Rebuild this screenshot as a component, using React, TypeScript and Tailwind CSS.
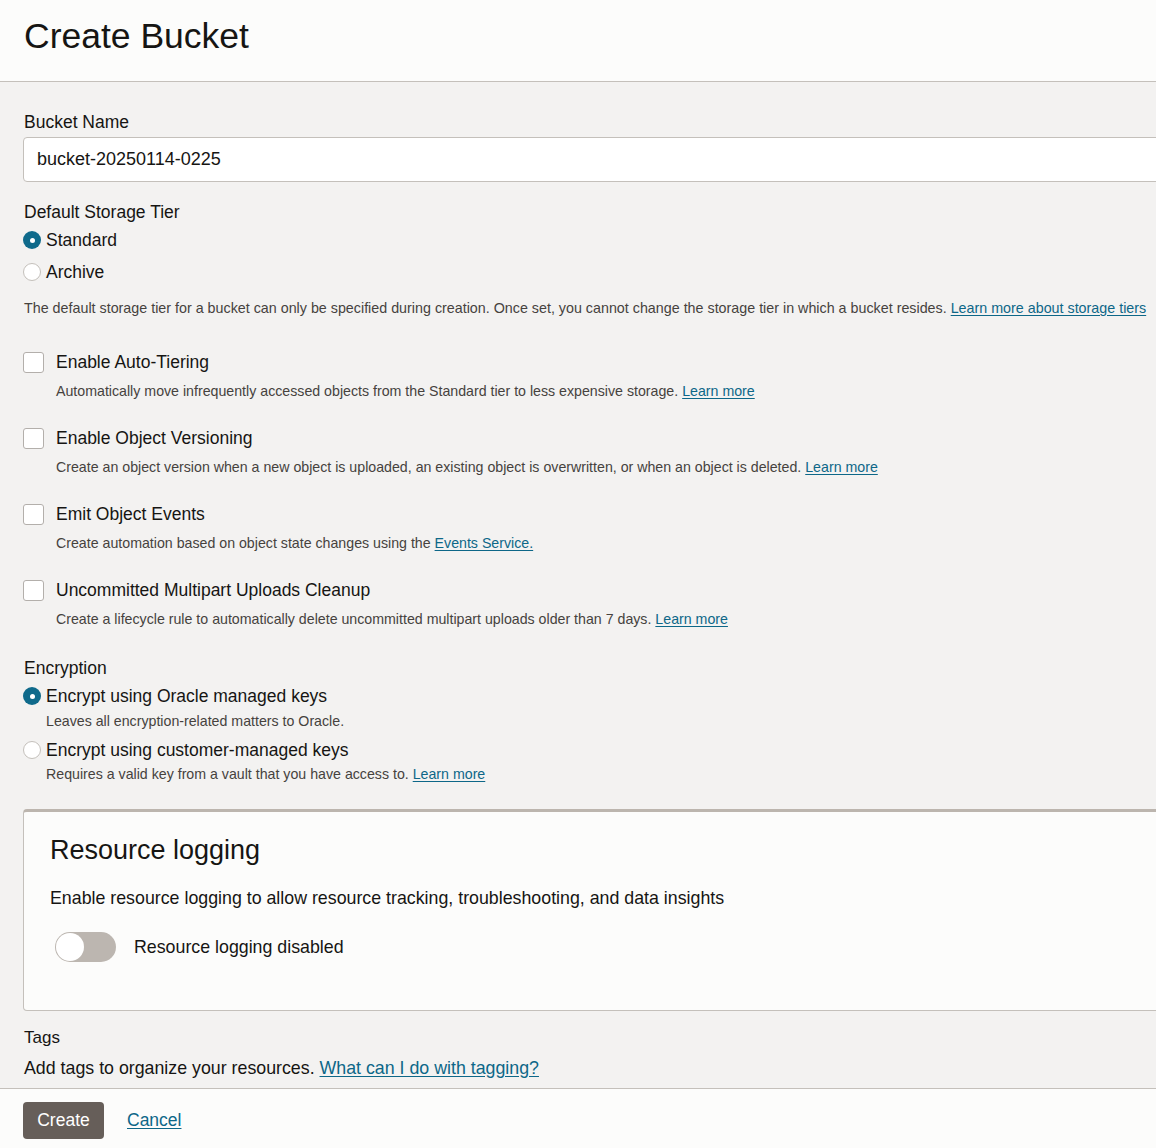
const font = { fontFamily: '"Liberation Sans", Arial, sans-serif' }

function Radio({ checked }: { checked?: boolean }) {
  return checked ? (
    <span className="flex h-[18px] w-[18px] shrink-0 items-center justify-center rounded-full bg-[#0f6a8b]">
      <span className="h-[5px] w-[5px] rounded-full bg-white" />
    </span>
  ) : (
    <span className="h-[18px] w-[18px] shrink-0 rounded-full border border-[#c4c0bb] bg-white" />
  )
}

function Link({ children }: { children: React.ReactNode }) {
  return <a href="#" className="text-[#0d6788] underline underline-offset-2">{children}</a>
}

function CheckOption({ label, children }: { label: string; children: React.ReactNode }) {
  return (
    <div>
      <label className="flex h-[24px] items-center">
        <span className="h-[21px] w-[21px] shrink-0 rounded-[3px] border border-[#b3afab] bg-white" />
        <span className="ml-[12px] text-[17.5px] text-[#161513]">{label}</span>
      </label>
      <p className="mt-[7px] ml-[33px] text-[14.2px] leading-[20px] text-[#46423e]">{children}</p>
    </div>
  )
}

export default function App() {
  return (
    <div className="min-h-[1148px] w-[1156px] overflow-hidden bg-[#f3f2f1] text-[#161513]" style={font}>
      <header className="h-[82px] border-b border-[#c4c0bb] bg-[#fcfcfb] px-[24px] pt-[15px]">
        <h1 className="text-[35.5px] leading-[42px]">Create Bucket</h1>
      </header>

      <main className="w-[1200px] pl-[23px] pt-[28px] pb-[8px]">
        <div className="pl-[1px] text-[17.5px] leading-[24px]">Bucket Name</div>
        <input
          readOnly
          value="bucket-20250114-0225"
          className="mt-[3px] h-[45px] w-full rounded-[4px] border border-[#c4c0bb] bg-white px-[13px] text-[18px] text-[#161513] outline-none"
        />

        <div className="mt-[18px] pl-[1px] text-[17.5px] leading-[24px]">Default Storage Tier</div>
        <label className="flex h-[32px] items-center">
          <Radio checked />
          <span className="ml-[5px] text-[17.5px]">Standard</span>
        </label>
        <label className="flex h-[32px] items-center">
          <Radio />
          <span className="ml-[5px] text-[17.5px]">Archive</span>
        </label>
        <p className="mt-[10px] pl-[1px] text-[14.3px] leading-[20px] text-[#46423e]">
          The default storage tier for a bucket can only be specified during creation. Once set, you cannot change the
          storage tier in which a bucket resides. <Link>Learn more about storage tiers</Link>
        </p>

        <div className="mt-[32px] flex flex-col gap-[25px]">
          <CheckOption label="Enable Auto-Tiering">
            Automatically move infrequently accessed objects from the Standard tier to less expensive storage.{' '}
            <Link>Learn more</Link>
          </CheckOption>
          <CheckOption label="Enable Object Versioning">
            Create an object version when a new object is uploaded, an existing object is overwritten, or when an object
            is deleted. <Link>Learn more</Link>
          </CheckOption>
          <CheckOption label="Emit Object Events">
            Create automation based on object state changes using the <Link>Events Service.</Link>
          </CheckOption>
          <CheckOption label="Uncommitted Multipart Uploads Cleanup">
            Create a lifecycle rule to automatically delete uncommitted multipart uploads older than 7 days.{' '}
            <Link>Learn more</Link>
          </CheckOption>
        </div>

        <div className="mt-[27px] pl-[1px] text-[17.5px] leading-[24px]">Encryption</div>
        <label className="mt-[4px] flex h-[24px] items-center">
          <Radio checked />
          <span className="ml-[5px] text-[17.5px]">Encrypt using Oracle managed keys</span>
        </label>
        <p className="mt-[3px] ml-[23px] text-[14.2px] leading-[20px] text-[#46423e]">
          Leaves all encryption-related matters to Oracle.
        </p>
        <label className="mt-[7px] flex h-[24px] items-center">
          <Radio />
          <span className="ml-[5px] text-[17.5px]">Encrypt using customer-managed keys</span>
        </label>
        <p className="mt-[2px] ml-[23px] text-[14.2px] leading-[20px] text-[#46423e]">
          Requires a valid key from a vault that you have access to. <Link>Learn more</Link>
        </p>

        <section className="mt-[25px] h-[202px] rounded-[4px] border border-t-[3px] border-[#c4c0bb] border-t-[#bcb5ae] bg-[#fcfcfb] pl-[26px] pt-[22px]">
          <h2 className="text-[27px] leading-[32px]">Resource logging</h2>
          <p className="mt-[20px] text-[17.8px] leading-[24px]">
            Enable resource logging to allow resource tracking, troubleshooting, and data insights
          </p>
          <div className="mt-[22px] flex items-center">
            <span className="ml-[5px] flex h-[30px] w-[61px] items-center rounded-full bg-[#bcb6b0] p-[1px]">
              <span className="h-[28px] w-[28px] rounded-full bg-white" />
            </span>
            <span className="ml-[18px] text-[17.8px]">Resource logging disabled</span>
          </div>
        </section>

        <div className="mt-[15px] pl-[1px] text-[17px] leading-[24px]">Tags</div>
        <p className="mt-[6px] pl-[1px] text-[17.8px] leading-[24px]">
          Add tags to organize your resources. <Link>What can I do with tagging?</Link>
        </p>
      </main>

      <footer className="flex h-[60px] items-start border-t border-[#c4c0bb] bg-[#fcfcfb] pl-[23px] pt-[13px]">
        <button className="h-[37px] w-[81px] rounded-[4px] bg-[#665e59] text-[17.5px] text-white">Create</button>
        <a href="#" className="ml-[23px] mt-[5px] text-[17.5px] text-[#0d6788] underline underline-offset-2">
          Cancel
        </a>
      </footer>
    </div>
  )
}
